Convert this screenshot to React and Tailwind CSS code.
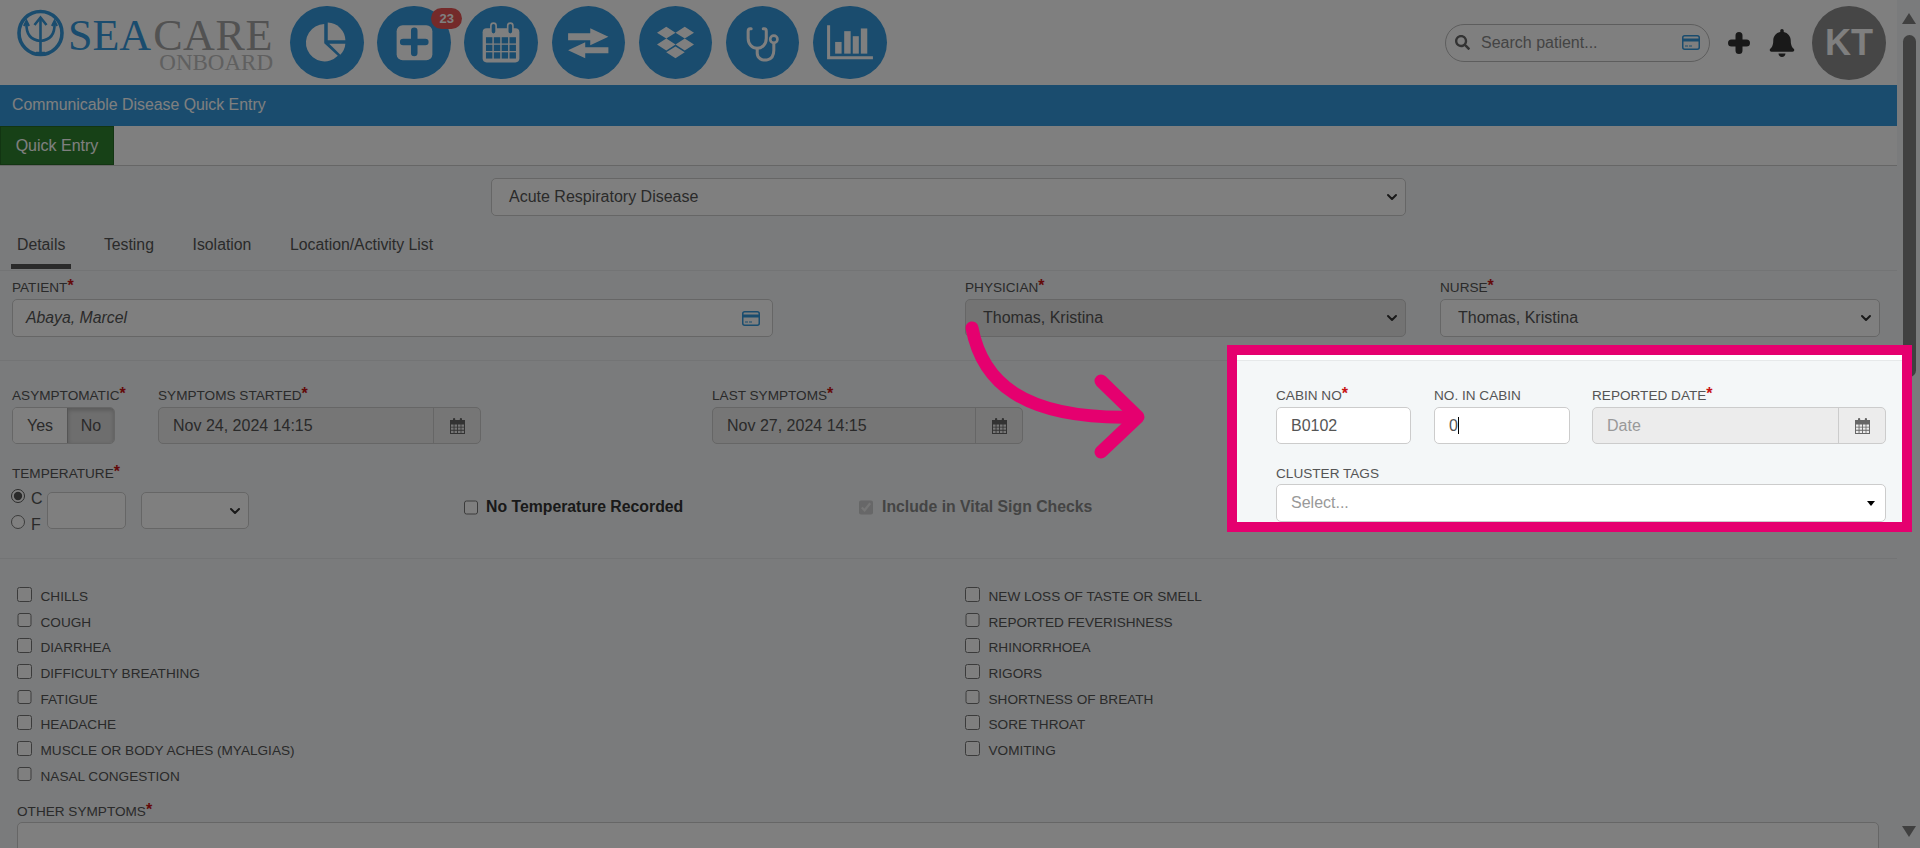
import React from "react";
import { ChevronDown } from "lucide-react";
import { FaDropbox, FaSearch, FaBell } from "react-icons/fa";

const Star = () => (
  <span className="text-[#c81414] font-bold text-[16px] leading-none align-top">*</span>
);

const Label = ({ children, req, className = "" }) => (
  <div className={"h-[18px] leading-[19px] text-[13.6px] text-[#555] whitespace-nowrap " + className}>
    {children}
    {req && <Star />}
  </div>
);

const Card = ({ className = "" }) => (
  <svg viewBox="0 0 18 15" className={"w-[18px] h-[15px] " + className}>
    <rect x="0.75" y="0.75" width="16.5" height="13.5" rx="2" fill="#fff" stroke="#3499dc" strokeWidth="1.5" />
    <rect x="1" y="3.5" width="16" height="3" fill="#3499dc" />
    <rect x="3" y="10.5" width="3" height="1" fill="#3499dc" />
    <rect x="7" y="10.5" width="3" height="1" fill="#3499dc" />
  </svg>
);

const Cal = () => (
  <svg viewBox="0 0 15 16" className="w-[15px] h-[16px]" fill="#666">
    <rect x="3" y="0" width="2.2" height="4" rx="1" />
    <rect x="9.8" y="0" width="2.2" height="4" rx="1" />
    <path d="M0 2h15v14H0z M1 6.5v2.2h2.6V6.5z M4.5 6.5v2.2h2.6V6.5z M8 6.5v2.2h2.6V6.5z M11.4 6.5v2.2H14V6.5z M1 9.6v2.2h2.6V9.6z M4.5 9.6v2.2h2.6V9.6z M8 9.6v2.2h2.6V9.6z M11.4 9.6v2.2H14V9.6z M1 12.7V15h2.6v-2.3z M4.5 12.7V15h2.6v-2.3z M8 12.7V15h2.6v-2.3z M11.4 12.7V15H14v-2.3z" fillRule="evenodd" />
  </svg>
);

const SelectBox = ({ value, className = "" }) => (
  <div className={"h-[38px] border border-[#ccc] rounded-[5px] flex items-center justify-between pl-[17px] pr-[5px] text-[16px] text-[#555] " + className}>
    <span>{value}</span>
    <ChevronDown size={16} strokeWidth={3} className="text-[#333]" />
  </div>
);

const DateBox = ({ value, placeholder, className = "" }) => (
  <div className={"h-[37px] border border-[#ccc] rounded-[5px] flex bg-[#ececec] text-[16px] " + className}>
    <div className={"flex-1 pl-[14px] leading-[35px] " + (placeholder ? "text-[#999]" : "text-[#555]")}>{value || placeholder}</div>
    <div className="w-[47px] border-l border-[#ccc] flex items-center justify-center">
      <Cal />
    </div>
  </div>
);

const Pie = () => (
  <svg viewBox="0 0 73 73" className="w-full h-full" fill="#fff">
    <path d="M34 18 A18.5 18.5 0 1 0 47.5 49.5 L34 37 Z" />
    <path d="M37.5 16.5 A18 18 0 0 1 55 34 L37.5 34 Z" />
    <path d="M39 37.5 L55 37.5 A18.5 18.5 0 0 1 50 48.5 Z" />
  </svg>
);
const PlusSq = () => (
  <svg viewBox="0 0 73 73" className="w-full h-full">
    <rect x="19.5" y="19" width="35.5" height="35" rx="6" fill="#fff" />
    <path d="M26 35.7H48M37 24.7V46.7" stroke="#3499dc" strokeWidth="6.5" strokeLinecap="round" />
  </svg>
);
const Calendar = () => (
  <svg viewBox="0 0 73 73" className="w-full h-full">
    <rect x="18.5" y="22" width="36.5" height="34" rx="4" fill="#fff" />
    {[29.3, 46].map((x) => (
      <rect key={x} x={x - 2.6} y="17" width="5.2" height="11" rx="2.6" fill="#3499dc" stroke="#fff" strokeWidth="1.6" />
    ))}
    {[31, 38.5, 46].map((y) =>
      [21.8, 29.6, 37.4, 45.2].map((x) => (
        <rect key={x + "-" + y} x={x} y={y} width="6.4" height="6.2" fill="#3499dc" />
      ))
    )}
  </svg>
);
const Exchange = () => (
  <svg viewBox="0 0 73 73" className="w-full h-full" fill="#fff">
    <path d="M16 27H38V22L56 30.5L38 39V34H16Z" />
    <path d="M56 41H33V36L16 44L33 52V47H56Z" />
  </svg>
);
const Steth = () => (
  <svg viewBox="0 0 73 73" className="w-full h-full" fill="none" stroke="#fff" strokeWidth="3" strokeLinecap="round">
    <path d="M25 22.5H24Q22 22.5 22 25V32C22 38 26 42 31 42C36 42 40 38 40 32V25Q40 22.5 38 22.5H37" />
    <path d="M31 42V47C31 52 36 54.5 41 53.5C46 52.5 47.5 48 47.5 44V37.5" />
    <circle cx="47.5" cy="33" r="3.6" strokeWidth="2.6" />
  </svg>
);
const Chart = () => (
  <svg viewBox="0 0 73 73" className="w-full h-full" fill="#fff">
    <path d="M14 19H17V50H59.5V53H14Z" />
    <rect x="22" y="35.7" width="6.4" height="11.6" />
    <rect x="31" y="25" width="6.4" height="22.3" />
    <rect x="39.5" y="30" width="6" height="17.3" />
    <rect x="47.5" y="22.3" width="6.4" height="25" />
  </svg>
);

const Circle = ({ children, badge }) => (
  <div className="relative w-[73.5px] h-[73.5px] rounded-full bg-[#3499dc] flex items-center justify-center shrink-0">
    {children}
    {badge && (
      <span className="absolute left-[54px] top-[2px] w-[31px] h-[21px] rounded-full bg-[#e85454] text-white text-[13px] font-bold leading-[21px] text-center">
        {badge}
      </span>
    )}
  </div>
);

const Trident = () => (
  <svg viewBox="0 0 47 48" className="w-[47px] h-[48px] shrink-0" fill="none" stroke="#3499dc">
    <circle cx="23.5" cy="24" r="21.5" strokeWidth="3.6" />
    <path d="M23.5 9V44M19 44H28" strokeWidth="2.6" />
    <path d="M17.5 16L23.5 8.5L29.5 16" strokeWidth="2.6" />
    <path d="M9.5 14C9 24 13 31 23.5 32C34 31 38 24 37.5 14" strokeWidth="2.6" />
    <path d="M7 17L9.5 12L12 17M35 17L37.5 12L40 17" strokeWidth="2.2" />
  </svg>
);

const Check = ({ label }) => (
  <div className="h-[25.7px] flex items-start gap-[9px]">
    <input type="checkbox" readOnly className="w-[14.5px] h-[14.5px] m-0 shrink-0" />
    <span className="text-[13.6px] leading-[20px] text-[#555] whitespace-nowrap">{label}</span>
  </div>
);

const left = ["CHILLS", "COUGH", "DIARRHEA", "DIFFICULTY BREATHING", "FATIGUE", "HEADACHE", "MUSCLE OR BODY ACHES (MYALGIAS)", "NASAL CONGESTION"];
const right = ["NEW LOSS OF TASTE OR SMELL", "REPORTED FEVERISHNESS", "RHINORRHOEA", "RIGORS", "SHORTNESS OF BREATH", "SORE THROAT", "VOMITING"];

export default function App() {
  return (
    <div className="relative w-[1920px] h-[848px] overflow-hidden flex bg-[#f4f7f8] font-['Liberation_Sans',Arial,sans-serif]">
      <main className="w-[1897px] shrink-0">
        <header className="h-[85px] bg-white flex items-start pt-[5.5px]">
          <div className="w-[290px] shrink-0 flex items-start pl-[17px] pt-[3.5px]">
            <Trident />
            <div className="ml-[4px] w-[205px] pt-[7.5px]">
              <div className="font-['Liberation_Serif',serif] text-[44px] leading-[38px] whitespace-nowrap">
                <span className="text-[#3499dc]">SEA</span>
                <span className="text-[#a4a4a4] tracking-[0.6px] ml-[2px]">CARE</span>
              </div>
              <div className="font-['Liberation_Serif',serif] text-[23px] leading-[16px] text-right text-[#c0c0c0]">ONBOARD</div>
            </div>
          </div>
          <nav className="flex gap-[13.7px]">
            <Circle><Pie /></Circle>
            <Circle badge="23"><PlusSq /></Circle>
            <Circle><Calendar /></Circle>
            <Circle><Exchange /></Circle>
            <Circle><FaDropbox size={37} className="text-white" /></Circle>
            <Circle><Steth /></Circle>
            <Circle><Chart /></Circle>
          </nav>
          <div className="ml-auto flex items-center pr-[11px]">
            <div className="w-[265px] h-[38px] rounded-full border border-[#bbb] flex items-center pl-[9px] pr-[9px] mr-[18px]">
              <FaSearch size={15} className="text-[#666] mr-[11px]" />
              <span className="flex-1 text-[16px] text-[#888]">Search patient...</span>
              <Card />
            </div>
            <svg viewBox="0 0 22 22" className="w-[22px] h-[22px] mr-[18px]" stroke="#333" strokeWidth="7" strokeLinecap="round">
              <path d="M3.5 11H18.5M11 3.5V18.5" />
            </svg>
            <FaBell size={28} className="text-[#333] mr-[16px]" />
            <div className="w-[74px] h-[74px] rounded-full bg-[#8c8c8c] text-white font-bold text-[36px] flex items-center justify-center">KT</div>
          </div>
        </header>

        <div className="h-[41px] bg-[#3499dc] text-white text-[15.85px] leading-[40px] pl-[12px]">Communicable Disease Quick Entry</div>

        <div className="h-[40px] bg-white border-b border-[#ccc]">
          <div className="w-[114px] h-[39px] bg-[#2f832f] border border-[#256a25] text-white text-[16px] leading-[37px] text-center">Quick Entry</div>
        </div>

        <div className="pt-[12px] pl-[491px]">
          <SelectBox value="Acute Respiratory Disease" className="w-[915px] bg-white" />
        </div>

        <div className="mt-[12px] h-[43px] pl-[11px] flex gap-[26.6px] border-b border-[#e6e9ea] text-[15.8px] text-[#555]">
          <div className="px-[6px] h-[41px] leading-[34px] border-b-[5px] border-[#555]">Details</div>
          <div className="px-[6px] leading-[34px]">Testing</div>
          <div className="px-[6px] leading-[34px]">Isolation</div>
          <div className="px-[6px] leading-[34px]">Location/Activity List</div>
        </div>

        <section className="pt-[7px] pb-[23px] pl-[12px] flex border-b border-[#e6e9ea]">
          <div className="w-[761px]">
            <Label req>PATIENT</Label>
            <div className="mt-[3px] h-[38px] border border-[#ccc] rounded-[5px] bg-white flex items-center justify-between pl-[13px] pr-[12px]">
              <span className="text-[15.8px] italic text-[#555]">Abaya, Marcel</span>
              <Card />
            </div>
          </div>
          <div className="w-[441px] ml-[192px]">
            <Label req>PHYSICIAN</Label>
            <SelectBox value="Thomas, Kristina" className="mt-[3px] bg-[#e6e6e6]" />
          </div>
          <div className="w-[440px] ml-[34px]">
            <Label req>NURSE</Label>
            <SelectBox value="Thomas, Kristina" className="mt-[3px] bg-white" />
          </div>
        </section>

        <section className="pt-[25px] pb-[29px] pl-[12px] border-b border-[#e6e9ea]">
          <div className="flex">
            <div className="w-[103px]">
              <Label req>ASYMPTOMATIC</Label>
              <div className="mt-[3px] h-[37px] flex border border-[#ccc] rounded-[5px] text-[16px] text-[#555] overflow-hidden">
                <div className="w-[54px] bg-white leading-[35px] text-center">Yes</div>
                <div className="flex-1 bg-[#dcdcdc] shadow-[inset_0_2px_4px_rgba(0,0,0,0.2)] leading-[35px] text-center border-l border-[#aaa]">No</div>
              </div>
            </div>
            <div className="w-[323px] ml-[43px]">
              <Label req>SYMPTOMS STARTED</Label>
              <DateBox value="Nov 24, 2024 14:15" className="mt-[3px]" />
            </div>
            <div className="w-[311px] ml-[231px]">
              <Label req>LAST SYMPTOMS</Label>
              <DateBox value="Nov 27, 2024 14:15" className="mt-[3px]" />
            </div>
          </div>

          <Label req className="mt-[20px]">TEMPERATURE</Label>
          <div className="mt-[10px] h-[37px] flex items-start -ml-[1px]">
            <div className="w-[35.5px] text-[16px] text-[#555]">
              <div className="h-[26px] flex items-start gap-[6px]">
                <input type="radio" name="unit" defaultChecked className="w-[14px] h-[14px] m-0 mt-[-3px] accent-[#555]" />
                <span className="leading-[20px] mt-[-3px]">C</span>
              </div>
              <div className="h-[20px] flex items-start gap-[6px]">
                <input type="radio" name="unit" className="w-[14px] h-[14px] m-0 mt-[-3px]" />
                <span className="leading-[20px] mt-[-3px]">F</span>
              </div>
            </div>
            <div className="w-[79px] h-[37px] border border-[#ccc] rounded-[5px] bg-white" />
            <div className="w-[107.5px] h-[37px] ml-[15.5px] border border-[#ccc] rounded-[5px] bg-white flex items-center justify-end pr-[5px]">
              <ChevronDown size={16} strokeWidth={3} className="text-[#333]" />
            </div>
            <div className="w-[395px] ml-[215px] mt-[8px] flex items-center gap-[8px]">
              <input type="checkbox" readOnly className="w-[14.5px] h-[14.5px] m-0" />
              <span className="text-[15.8px] font-bold text-[#333] leading-[14px]">No Temperature Recorded</span>
            </div>
            <div className="mt-[8px] flex items-center gap-[9px]">
              <input type="checkbox" checked readOnly disabled className="w-[14.5px] h-[14.5px] m-0" />
              <span className="text-[15.8px] font-bold text-[#888] leading-[14px]">Include in Vital Sign Checks</span>
            </div>
          </div>
        </section>

        <section className="pt-[28px] pl-[17px]">
          <div className="grid grid-cols-[948px_1fr]">
            <div>{left.map((l) => <Check key={l} label={l} />)}</div>
            <div>{right.map((l) => <Check key={l} label={l} />)}</div>
          </div>
          <Label req className="mt-[9.4px]">OTHER SYMPTOMS</Label>
          <div className="mt-[2px] w-[1862px] h-[70px] border border-[#ccc] rounded-[5px] bg-white" />
        </section>
      </main>

      <aside className="w-[23px] flex flex-col items-center justify-between pt-[13px] pb-[11px] pl-[1px]">
        <div className="flex flex-col items-center w-full">
          <div className="w-0 h-0 border-l-[7px] border-r-[7px] border-b-[11px] border-l-transparent border-r-transparent border-b-[#808080]" />
          <div className="mt-[11px] w-[13px] h-[342px] rounded-full bg-[#808080]" />
        </div>
        <div className="w-0 h-0 border-l-[7px] border-r-[7px] border-t-[11px] border-l-transparent border-r-transparent border-t-[#808080]" />
      </aside>

      <div className="absolute inset-0 bg-black/50 z-10" />

      <div className="absolute z-20 left-[1227px] top-[345px] w-[685px] h-[187px] border-[10px] border-[#e5006f] bg-[#f4f7f8] overflow-hidden">
        <div className="h-[6px] bg-white border-b border-[#e6e9ea]" />
        <div className="pt-[25px] pl-[39px]">
          <div className="flex">
            <div className="w-[135px]">
              <Label req>CABIN NO</Label>
              <input readOnly value="B0102" className="mt-[3px] block w-full h-[37px] border border-[#ccc] rounded-[5px] bg-white pl-[14px] text-[16px] text-[#555]" />
            </div>
            <div className="w-[135.5px] ml-[23px]">
              <Label>NO. IN CABIN</Label>
              <div className="mt-[3px] h-[37px] border border-[#ccc] rounded-[5px] bg-white pl-[14px] text-[16px] text-[#555] leading-[35px] flex items-center">
                0<span className="w-[1px] h-[17px] bg-black" />
              </div>
            </div>
            <div className="w-[294px] ml-[22.5px]">
              <Label req>REPORTED DATE</Label>
              <DateBox placeholder="Date" className="mt-[3px]" />
            </div>
          </div>
          <Label className="mt-[20px]">CLUSTER TAGS</Label>
          <div className="mt-[2px] w-[610px] h-[38px] border border-[#ccc] rounded-[5px] bg-white flex items-center justify-between pl-[14px] pr-[10px] text-[16px] text-[#999]">
            <span>Select...</span>
            <span className="w-0 h-0 border-l-[4px] border-r-[4px] border-t-[5px] border-l-transparent border-r-transparent border-t-black" />
          </div>
        </div>
      </div>

      <svg className="absolute z-20 left-[960px] top-[320px] w-[190px] h-[140px]" viewBox="0 0 190 140" fill="none" stroke="#e5006f" strokeWidth="13" strokeLinecap="round" strokeLinejoin="round">
        <path d="M12 8C22 60 60 100 175 97" />
        <path d="M141 61L178 97L141 132" />
      </svg>
    </div>
  );
}
